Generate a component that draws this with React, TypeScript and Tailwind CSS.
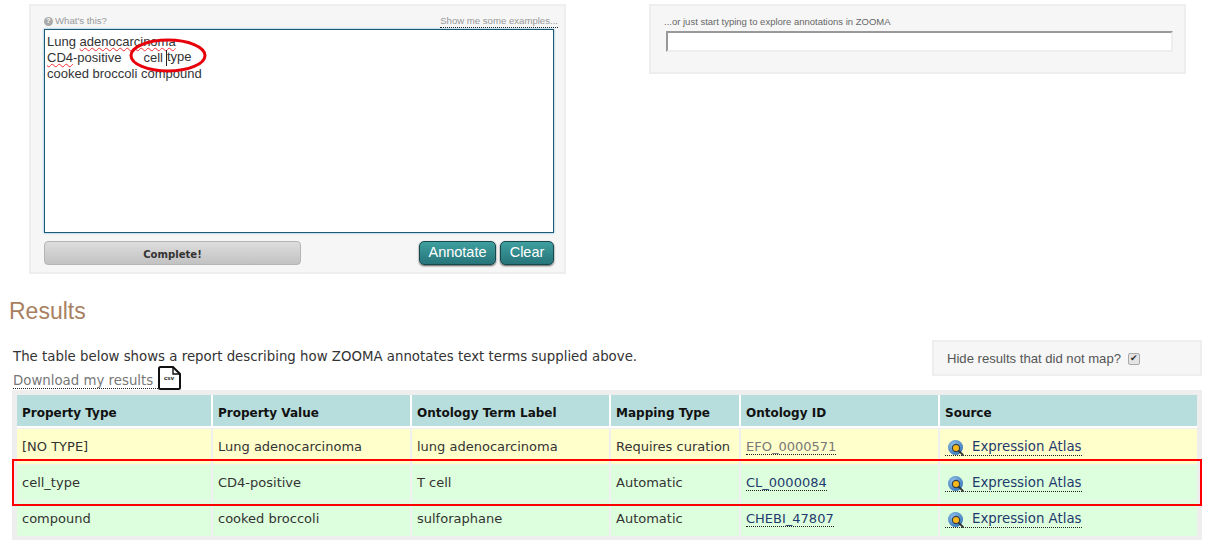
const ROWS = [
  { type: '[NO TYPE]', value: 'Lung adenocarcinoma', label: 'lung adenocarcinoma', mapping: 'Requires curation', id: 'EFO_0000571', bg: 'bg-[#ffffcc]', idColor: 'text-[#777777]' },
  { type: 'cell_type', value: 'CD4-positive', label: 'T cell', mapping: 'Automatic', id: 'CL_0000084', bg: 'bg-[#ddffdd]', idColor: 'text-[#1f3a6e]' },
  { type: 'compound', value: 'cooked broccoli', label: 'sulforaphane', mapping: 'Automatic', id: 'CHEBI_47807', bg: 'bg-[#ddffdd]', idColor: 'text-[#1f3a6e]' },
];

const HEADERS = [
  { name: 'Property Type', w: 'w-[196px]' },
  { name: 'Property Value', w: 'w-[199px]' },
  { name: 'Ontology Term Label', w: 'w-[199px]' },
  { name: 'Mapping Type', w: 'w-[130px]' },
  { name: 'Ontology ID', w: 'w-[199px]' },
  { name: 'Source', w: 'w-[257px]' },
];

function AtlasIcon() {
  return (
    <svg width="16" height="16" viewBox="0 0 16 16" className="mt-[3px] shrink-0">
      <defs>
        <radialGradient id="atlasBall" cx="0.4" cy="0.35" r="0.7">
          <stop offset="0" stopColor="#9cc8ee" />
          <stop offset="1" stopColor="#2f72b8" />
        </radialGradient>
      </defs>
      <circle cx="7.5" cy="7.5" r="7.5" fill="url(#atlasBall)" />
      <path d="M10.5 10.5l5 5" stroke="#333" strokeWidth="1.8" strokeLinecap="round" />
      <circle cx="8" cy="8" r="3.6" fill="#f8b818" stroke="#33414f" strokeWidth="1.2" />
    </svg>
  );
}

function CsvIcon() {
  return (
    <svg width="23" height="24" viewBox="0 0 23 24" className="shrink-0">
      <path d="M2.5 1h12.5l7 7v13.5a1.5 1.5 0 0 1-1.5 1.5H2.5A1.5 1.5 0 0 1 1 21.5V2.5A1.5 1.5 0 0 1 2.5 1z" fill="#fff" stroke="#111" strokeWidth="2" />
      <path d="M15 1v7h7" fill="none" stroke="#111" strokeWidth="1.4" />
      <text x="11" y="14" fontSize="6" fontWeight="700" textAnchor="middle" fontFamily="'Liberation Sans', sans-serif" fill="#111">csv</text>
    </svg>
  );
}

export default function App() {
  return (
    <div className="relative h-[545px] w-[1213px] overflow-hidden bg-white font-['DejaVu_Sans',sans-serif] text-[13px] text-[#333333]">
      <div className="flex items-start pl-[29px] pt-[4px]">
        <div className="flex h-[270px] w-[537px] flex-col border-2 border-[#eeeeee] bg-[#f6f6f6] pl-[13px] pr-[10px] pt-[8px] font-['Liberation_Sans',sans-serif]">
          <div className="mr-[-4px] flex h-[15px] items-center justify-between text-[9.6px] text-[#999999]">
            <span className="flex items-center gap-[2px]">
              <span className="flex h-[9px] w-[9px] items-center justify-center rounded-full bg-[#aaaaaa] text-[7px] font-bold text-white">?</span>
              What's this?
            </span>
            <span className="border-b border-dotted border-[#222222] leading-[12px]">Show me some examples...</span>
          </div>
          <div className="h-[204px] w-[510px] border border-[#1d5a78] bg-white px-[2px] pt-[4px] text-[13px] leading-[16px] text-[#333333] shadow-[0_0_2px_#6fb4d8]">
            <div>
              Lung <span className="underline decoration-red-500 decoration-wavy decoration-1">adenocarcinoma</span>
            </div>
            <div className="flex">
              <span className="underline decoration-red-500 decoration-wavy decoration-1">CD4</span>-positive
              <span className="ml-[22px]">cell</span>
              <span className="ml-[3px] border-l border-[#222222] leading-[14px]">type</span>
            </div>
            <div>cooked broccoli compound</div>
          </div>
          <div className="mt-[8px] flex items-center gap-[4px]">
            <button className="h-[24px] w-[257px] rounded-[4px] border border-[#b5b5b5] bg-gradient-to-b from-[#dddddd] to-[#c2c2c2] pt-[3px] font-['DejaVu_Sans',sans-serif] text-[10.1px] font-bold text-[#333333]">
              Complete!
            </button>
            <button className="ml-auto h-[24px] w-[77px] rounded-[5px] border border-[#17484c] bg-gradient-to-b from-[#3f9f9f] to-[#26757a] text-[14.5px] text-white shadow-[0_1px_2px_#555555]">
              Annotate
            </button>
            <button className="h-[24px] w-[54px] rounded-[5px] border border-[#17484c] bg-gradient-to-b from-[#3f9f9f] to-[#26757a] text-[14.5px] text-white shadow-[0_1px_2px_#555555]">
              Clear
            </button>
          </div>
        </div>

        <div className="ml-[83px] h-[70px] w-[537px] border-2 border-[#eeeeee] bg-[#f6f6f6] px-[15px] pt-[9px] font-['Liberation_Sans',sans-serif]">
          <div className="ml-[-2px] text-[9.5px] leading-[14px] text-[#666666]">...or just start typing to explore annotations in ZOOMA</div>
          <div className="mt-[2px] h-[21px] w-[507px] border-2 border-b-[#eeeeee] border-l-[#999999] border-r-[#eeeeee] border-t-[#999999] bg-white" />
        </div>
      </div>

      <h2 className="mt-[23px] pl-[9px] font-['Liberation_Sans',sans-serif] text-[23px] font-light leading-[28px] text-[#a87f60]">Results</h2>

      <div className="mt-[23px] flex h-[46px] pl-[13px] text-[13.33px]">
        <div>
          <p className="leading-[18px]">The table below shows a report describing how ZOOMA annotates text terms supplied above.</p>
          <div className="flex items-end">
            <span className="mb-[1px] border-b border-dotted border-[#222222] pr-[5px] leading-[15px] text-[#777777]">Download my results</span>
            <CsvIcon />
          </div>
        </div>
        <div className="ml-auto mr-[11px] mt-[-8px] flex h-[36px] w-[270px] items-center border-2 border-[#eeeeee] bg-[#f6f6f6] pl-[13px] pt-[1px] font-['Liberation_Sans',sans-serif] text-[13.1px] text-[#555555]">
          Hide results that did not map?
          <span className="ml-[7px] flex h-[12px] w-[12px] items-center justify-center rounded-[2px] border border-[#aaaaaa] bg-[#e4e4e4] text-[9px] leading-none text-[#333333]">✔</span>
        </div>
      </div>

      <div className="ml-[12px] mt-[-4px] w-[1190px] bg-[#eeeeee] px-[5px] pb-[4px] pt-[5px]">
        <table className="w-[1180px] table-fixed border-separate border-spacing-0">
          <thead>
            <tr className="h-[33px]">
              {HEADERS.map(h => (
                <th key={h.name} className={`${h.w} border-b-2 border-r-2 border-white bg-[#b7dddc] px-[5px] pt-[4px] text-left text-[12px] font-bold text-[#111111] last:border-r-0`}>
                  {h.name}
                </th>
              ))}
            </tr>
          </thead>
          <tbody>
            {ROWS.map(row => (
              <tr key={row.type} className={`h-[36px] ${row.bg}`}>
                <td className="border-r-2 border-t border-[#f0f0f0] px-[5px]">{row.type}</td>
                <td className="border-r-2 border-t border-[#f0f0f0] px-[5px]">{row.value}</td>
                <td className="border-r-2 border-t border-[#f0f0f0] px-[5px]">{row.label}</td>
                <td className="border-r-2 border-t border-[#f0f0f0] px-[5px]">{row.mapping}</td>
                <td className="border-r-2 border-t border-[#f0f0f0] px-[5px]">
                  <span className={`border-b border-dotted border-[#222222] ${row.idColor}`}>{row.id}</span>
                </td>
                <td className="border-t border-[#f0f0f0] px-[5px]">
                  <span className="inline-flex h-[17px] items-center gap-[8px] border-b border-dotted border-[#222222] pl-[3px] align-middle text-[13.33px] text-[#1f3a6e]">
                    <AtlasIcon />
                    Expression Atlas
                  </span>
                </td>
              </tr>
            ))}
          </tbody>
        </table>
      </div>

      {/* hand drawn annotations on top of the screenshot */}
      <svg width="80" height="36" viewBox="0 0 80 36" className="absolute left-[129px] top-[38px]">
        <ellipse cx="39" cy="17.5" rx="37" ry="15.5" fill="none" stroke="#e8000b" strokeWidth="3" />
      </svg>
      <div className="absolute left-[12px] top-[459px] h-[47px] w-[1190px] border-2 border-[#ff0000]" />
    </div>
  );
}
